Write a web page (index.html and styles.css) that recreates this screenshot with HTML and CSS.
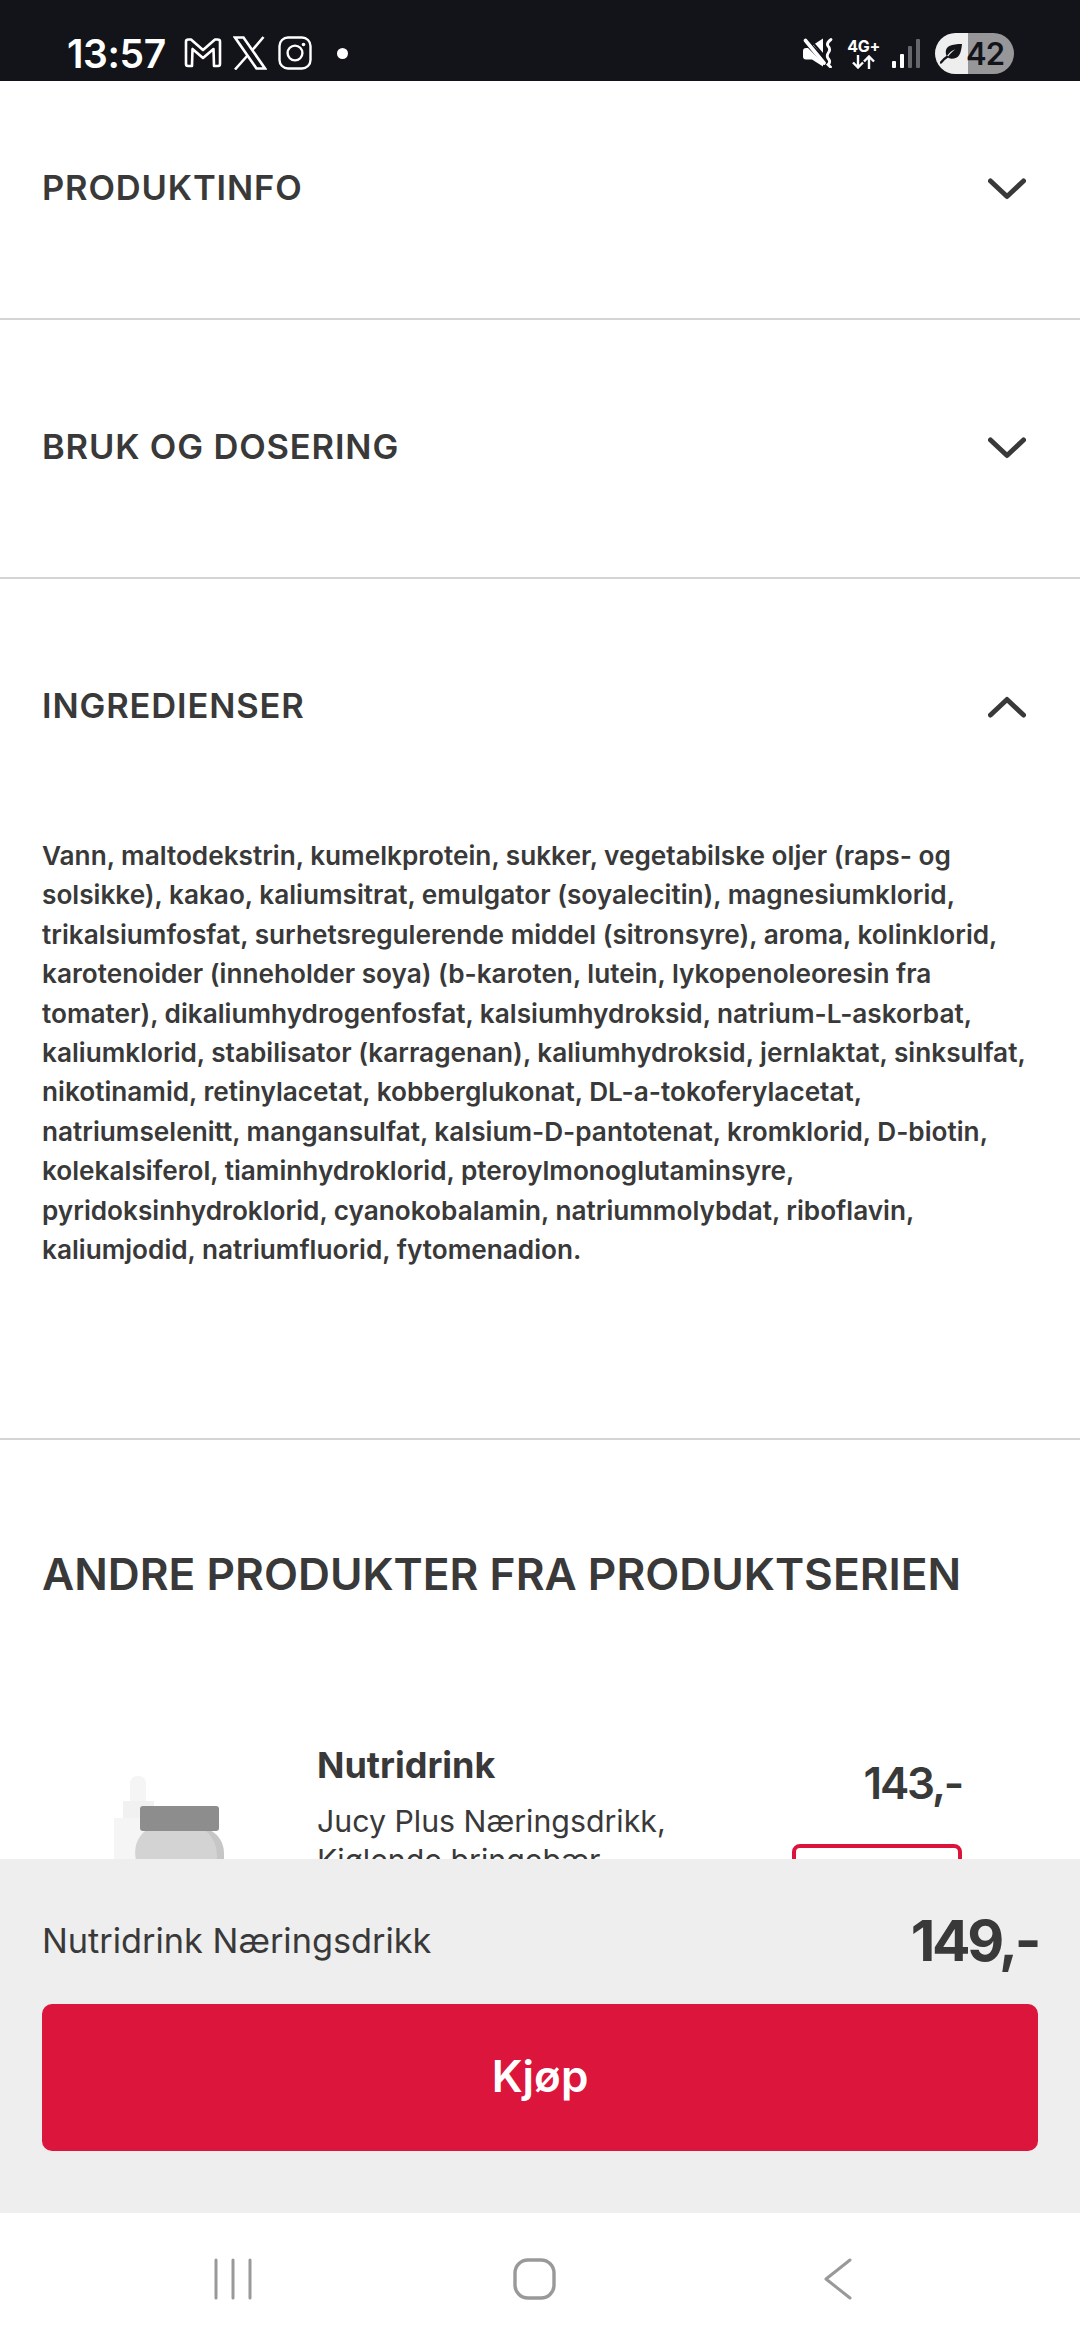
FILE: index.html
```html
<!DOCTYPE html>
<html lang="nb">
<head>
    <meta charset="UTF-8">
    <meta name="viewport" content="width=device-width, initial-scale=1.0">
    <title>Nutridrink Næringsdrikk</title>
    <link rel="stylesheet" href="styles.css">
</head>
<body>
    <div class="status-bar">
        <div class="status-left">
            <span class="clock">13:57</span>
            <svg class="icon-gmail" width="38" height="30" viewBox="0 0 38 30" fill="none" stroke="#fff" stroke-width="2.6" stroke-linejoin="round">
                <path d="M2 3.5 Q2 1.5 4.5 1.5 L7 1.5 L19 12 L31 1.5 L33.5 1.5 Q36 1.5 36 3.5 L36 26 Q36 28 34 28 L30 28 L29.5 11 L19 20 L8.5 11 L8 28 L4 28 Q2 28 2 26 Z"/>
            </svg>
            <svg class="icon-x" width="34" height="34" viewBox="0 0 34 34" fill="none" stroke="#fff" stroke-width="2.6">
                <path d="M2 1.5 H10.5 L32 32.5 H23.5 Z"/>
                <path d="M30.5 1 L19 14.5 M14.5 19.5 L2 33.5"/>
            </svg>
            <svg class="icon-insta" width="34" height="34" viewBox="0 0 34 34" fill="none" stroke="#fff" stroke-width="2.4">
                <rect x="1.5" y="1.5" width="31" height="31" rx="8.5"/>
                <circle cx="17" cy="17" r="7.4"/>
                <circle cx="25.5" cy="8.5" r="1.8" fill="#fff" stroke="none"/>
            </svg>
            <span class="status-dot"></span>
        </div>
        <div class="status-right">
            <svg class="icon-mute" width="30" height="30" viewBox="0 0 30 30" fill="#fff">
                <path d="M0 13 Q0 10 3 10 H5 L20 25 V28.5 L9 21.5 H3 Q0 21.5 0 18.5 Z"/>
                <path d="M10 7 L20 0.5 V17 Z"/>
                <path d="M5 -1 L23 20" fill="none" stroke="#13141a" stroke-width="2"/>
                <path d="M2.5 2.5 L21 25" fill="none" stroke="#fff" stroke-width="3.6" stroke-linecap="round"/>
                <path d="M28 1.5 Q23 5 25 8 Q28 11 25.5 14.5 Q23 18 25.5 21 Q28 24 25 26.5 L27.5 29" fill="none" stroke="#fff" stroke-width="2.8" stroke-linecap="round"/>
            </svg>
            <div class="net-type">
                <span class="net-label">4G+</span>
                <svg width="23" height="14" viewBox="0 0 23 14" fill="none" stroke="#fff" stroke-width="2.4">
                    <path d="M6 0 V12.5 M1 7.5 L6 12.5 L11 7.5"/>
                    <path d="M17 14 V1.5 M12 6.5 L17 1.5 L22 6.5"/>
                </svg>
            </div>
            <svg class="icon-signal" width="28" height="29" viewBox="0 0 28 29">
                <rect x="0" y="22" width="4" height="7" rx="1" fill="#fff"/>
                <rect x="8" y="15" width="4" height="14" rx="1" fill="#fff"/>
                <rect x="16" y="7" width="4" height="22" rx="1" fill="#66676b"/>
                <rect x="24" y="0" width="4" height="29" rx="1" fill="#66676b"/>
            </svg>
            <div class="battery">
                <svg class="icon-leaf" width="23" height="21" viewBox="0 0 24 22">
                    <path d="M23 1 C12 1 6 3 6 9.5 C6 11.5 6.5 12.5 7 14 C9.5 10 12 8 16 6.5 C13 9 10 11.5 8 15 C9.5 16 10.5 16.5 12 16.5 C20 16.5 22 11 23 1 Z" fill="#13141a"/>
                    <path d="M1 20.5 C3 18 5 16 7.5 14.5" fill="none" stroke="#13141a" stroke-width="2.4" stroke-linecap="round"/>
                </svg>
                <span class="battery-level">42</span>
            </div>
        </div>
    </div>

    <main class="content">
        <section class="accordion">
            <div class="accordion-head">
                <h2>PRODUKTINFO</h2>
                <svg class="chevron" width="38" height="22" viewBox="0 0 38 22"><path d="M2.5 3 L19 18.5 L35.5 3"/></svg>
            </div>
        </section>
        <section class="accordion">
            <div class="accordion-head">
                <h2>BRUK OG DOSERING</h2>
                <svg class="chevron" width="38" height="22" viewBox="0 0 38 22"><path d="M2.5 3 L19 18.5 L35.5 3"/></svg>
            </div>
        </section>
        <section class="accordion accordion-open">
            <div class="accordion-head">
                <h2>INGREDIENSER</h2>
                <svg class="chevron" width="38" height="22" viewBox="0 0 38 22"><path d="M2.5 19 L19 3.5 L35.5 19"/></svg>
            </div>
            <p class="ingredients">Vann, maltodekstrin, kumelkprotein, sukker, vegetabilske oljer (raps- og<br>solsikke), kakao, kaliumsitrat, emulgator (soyalecitin), magnesiumklorid,<br>trikalsiumfosfat, surhetsregulerende middel (sitronsyre), aroma, kolinklorid,<br>karotenoider (inneholder soya) (b-karoten, lutein, lykopenoleoresin fra<br>tomater), dikaliumhydrogenfosfat, kalsiumhydroksid, natrium-L-askorbat,<br>kaliumklorid, stabilisator (karragenan), kaliumhydroksid, jernlaktat, sinksulfat,<br>nikotinamid, retinylacetat, kobberglukonat, DL-a-tokoferylacetat,<br>natriumselenitt, mangansulfat, kalsium-D-pantotenat, kromklorid, D-biotin,<br>kolekalsiferol, tiaminhydroklorid, pteroylmonoglutaminsyre,<br>pyridoksinhydroklorid, cyanokobalamin, natriummolybdat, riboflavin,<br>kaliumjodid, natriumfluorid, fytomenadion.</p>
        </section>

        <section class="series">
            <h2 class="series-title">ANDRE PRODUKTER FRA PRODUKTSERIEN</h2>
            <div class="product">
                <div class="product-image">
                    <svg width="110" height="100" viewBox="0 0 110 100">
                        <path d="M16 25 V8 Q16 0 24 0 Q32 0 32 8 V25 Z" fill="#f5f5f5"/>
                        <rect x="9" y="25" width="31" height="20" fill="#f1f1f1"/>
                        <rect x="0" y="42" width="30" height="58" fill="#f5f5f5"/>
                        <path d="M86 54 H96 Q110 62 110 78 V100 H86 Z" fill="#c6c6c6"/>
                        <path d="M32 54 H91 Q103 64 103 80 V100 H22 V84 Q18 66 32 54 Z" fill="#d3d3d3"/>
                        <rect x="26" y="30" width="79" height="25" rx="3" fill="#8d8d8d"/>
                    </svg>
                </div>
                <div class="product-info">
                    <div class="product-name">Nutridrink</div>
                    <div class="product-desc">Jucy Plus Næringsdrikk,<br>Kjølende bringebær</div>
                </div>
                <div class="product-buy">
                    <div class="product-price">143,-</div>
                    <div class="product-button"></div>
                </div>
            </div>
        </section>

        <div class="buy-bar">
            <div class="buy-row">
                <span class="buy-name">Nutridrink Næringsdrikk</span>
                <span class="buy-price">149,-</span>
            </div>
            <div class="buy-button">Kjøp</div>
        </div>
    </main>

    <div class="nav-bar">
        <svg class="nav-recents" width="38" height="42" viewBox="0 0 38 42" fill="none" stroke="#999" stroke-width="3" stroke-linecap="round">
            <path d="M2 2 V40 M19 2 V40 M36 2 V40"/>
        </svg>
        <svg class="nav-home" width="43" height="42" viewBox="0 0 43 42" fill="none" stroke="#999" stroke-width="3.4">
            <rect x="2" y="2" width="39" height="38" rx="13"/>
        </svg>
        <svg class="nav-back" width="28" height="42" viewBox="0 0 28 42" fill="none" stroke="#999" stroke-width="3" stroke-linecap="round" stroke-linejoin="round">
            <path d="M26 2 L2 21 L26 40"/>
        </svg>
    </div>
</body>
</html>
```

FILE: styles.css
```css
* {
    box-sizing: border-box;
}

html, body {
    margin: 0;
    padding: 0;
}

body {
    width: 1080px;
    height: 2340px;
    display: flex;
    flex-direction: column;
    overflow: hidden;
    font-family: 'Inter', 'Noto Sans', sans-serif;
    color: #393939;
    background-color: #ffffff;
}

.status-bar {
    height: 81px;
    flex: none;
    display: flex;
    justify-content: space-between;
    padding: 31px 66px 0 67px;
    background-color: #13141a;
    color: #ffffff;
}

.status-left,
.status-right {
    height: 44px;
    display: flex;
    align-items: center;
}

.clock {
    font-size: 39px;
    font-weight: 600;
    letter-spacing: -0.4px;
    margin-right: 18px;
}

.icon-x {
    margin-left: 11px;
}

.icon-insta {
    margin-left: 11px;
}

.status-dot {
    width: 11px;
    height: 11px;
    margin-left: 25px;
    border-radius: 50%;
    background-color: #ffffff;
}

.net-type {
    margin-left: 14px;
    display: flex;
    flex-direction: column;
    align-items: center;
}

.net-label {
    font-size: 16px;
    font-weight: 700;
    line-height: 17px;
    letter-spacing: -0.3px;
}

.icon-signal {
    margin-left: 12px;
}

.battery {
    width: 79px;
    height: 41px;
    margin-left: 15px;
    display: flex;
    align-items: center;
    padding-left: 5px;
    border-radius: 21px;
    background: linear-gradient(to right, #eeeeee 0, #eeeeee 42%, #97979a 42%, #97979a 100%);
    color: #13141a;
}

.battery-level {
    font-size: 31px;
    font-weight: 600;
    letter-spacing: -1px;
    margin-left: 3px;
}

.content {
    position: relative;
    flex: 1;
    min-height: 0;
    overflow: hidden;
}

.accordion {
    border-bottom: 2px solid #d4d4d4;
}

/* the list is scrolled a little under the status bar */
.accordion:first-child {
    margin-top: -20px;
}

.accordion-head {
    height: 256px;
    margin-bottom: 1px;
    display: flex;
    justify-content: space-between;
    align-items: center;
    padding: 0 54px 0 42px;
}

.accordion-head h2 {
    margin: 0 0 3px;
    font-size: 34.5px;
    font-weight: 600;
    letter-spacing: 0.85px;
    color: #393939;
}

.chevron {
    fill: none;
    stroke: #393939;
    stroke-width: 5;
    stroke-linecap: round;
    stroke-linejoin: round;
}

.accordion-open {
    height: 861px;
}

.ingredients {
    margin: 0;
    padding: 0 30px 0 42px;
    font-size: 26.2px;
    font-weight: 600;
    line-height: 39.4px;
    white-space: nowrap;
    color: #393939;
}

.series {
    padding: 0 42px;
}

.series-title {
    margin: 0;
    padding-top: 107px;
    font-size: 44.25px;
    line-height: 54px;
    font-weight: 600;
    color: #393939;
}

.product {
    display: flex;
    margin-top: 142px;
}

.product-image {
    width: 275px;
    flex: none;
    padding: 33px 0 0 72px;
}

.product-info {
    flex: 1;
}

.product-name {
    font-size: 36px;
    font-weight: 700;
    line-height: 44px;
}

.product-desc {
    margin-top: 15px;
    font-size: 30.3px;
    line-height: 39px;
}

.product-buy {
    width: 170px;
    flex: none;
    margin-right: 76px;
}

.product-price {
    margin-top: 14px;
    text-align: right;
    font-size: 44px;
    font-weight: 600;
    letter-spacing: -2.2px;
    line-height: 52px;
}

.product-button {
    height: 80px;
    margin-top: 35px;
    border: 4px solid #dc143c;
    border-radius: 8px;
}

.buy-bar {
    position: absolute;
    left: 0;
    right: 0;
    bottom: 0;
    height: 354px;
    padding: 0 42px;
    background-color: #eeeeee;
}

.buy-row {
    height: 145px;
    display: flex;
    justify-content: space-between;
    align-items: center;
    padding-top: 18px;
}

.buy-name {
    font-size: 34.3px;
    color: #393939;
}

.buy-price {
    font-size: 57px;
    font-weight: 700;
    letter-spacing: -3.4px;
    color: #393939;
}

.buy-button {
    height: 147px;
    display: flex;
    justify-content: center;
    align-items: center;
    padding-bottom: 4px;
    border-radius: 10px;
    background-color: #db153c;
    color: #ffffff;
    font-size: 44px;
    font-weight: 600;
}

.nav-bar {
    height: 127px;
    flex: none;
    display: flex;
    align-items: center;
    padding: 5px 0 0 214px;
    gap: 261px;
    background-color: #ffffff;
}

.nav-back {
    margin-left: 7px;
}
```
